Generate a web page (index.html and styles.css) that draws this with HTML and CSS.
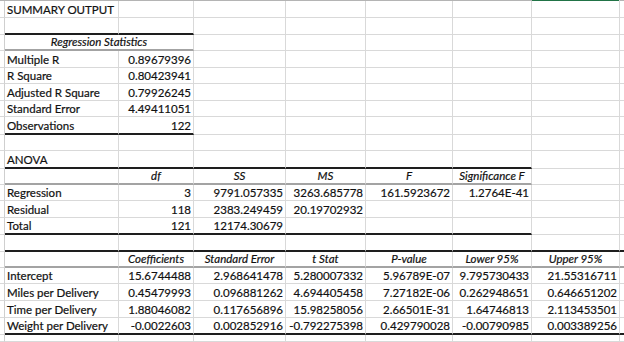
FILE: index.html
```html
<!DOCTYPE html>
<html lang="en">
<head>
<meta charset="utf-8">
<title>Summary Output</title>
<link rel="stylesheet" href="styles.css">
</head>
<body>
<div class="sheet">
  <!-- row 1 -->
  <div class="c s"></div><div class="c">SUMMARY OUTPUT</div><div class="c"></div><div class="c"></div><div class="c"></div><div class="c"></div><div class="c"></div><div class="c sel"></div><div class="c"></div>
  <!-- row 2 -->
  <div class="c s"></div><div class="c tk"></div><div class="c tk"></div><div class="c"></div><div class="c"></div><div class="c"></div><div class="c"></div><div class="c"></div><div class="c"></div>
  <!-- row 3 -->
  <div class="c s"></div><div class="c h tn span2">Regression Statistics</div><div class="c"></div><div class="c"></div><div class="c"></div><div class="c"></div><div class="c"></div><div class="c"></div>
  <!-- row 4 -->
  <div class="c s"></div><div class="c">Multiple R</div><div class="c n">0.89679396</div><div class="c"></div><div class="c"></div><div class="c"></div><div class="c"></div><div class="c"></div><div class="c"></div>
  <!-- row 5 -->
  <div class="c s"></div><div class="c">R Square</div><div class="c n">0.80423941</div><div class="c"></div><div class="c"></div><div class="c"></div><div class="c"></div><div class="c"></div><div class="c"></div>
  <!-- row 6 -->
  <div class="c s"></div><div class="c">Adjusted R Square</div><div class="c n">0.79926245</div><div class="c"></div><div class="c"></div><div class="c"></div><div class="c"></div><div class="c"></div><div class="c"></div>
  <!-- row 7 -->
  <div class="c s"></div><div class="c">Standard Error</div><div class="c n">4.49411051</div><div class="c"></div><div class="c"></div><div class="c"></div><div class="c"></div><div class="c"></div><div class="c"></div>
  <!-- row 8 -->
  <div class="c s"></div><div class="c tk">Observations</div><div class="c n tk">122</div><div class="c"></div><div class="c"></div><div class="c"></div><div class="c"></div><div class="c"></div><div class="c"></div>
  <!-- row 9 -->
  <div class="c s"></div><div class="c"></div><div class="c"></div><div class="c"></div><div class="c"></div><div class="c"></div><div class="c"></div><div class="c"></div><div class="c"></div>
  <!-- row 10 -->
  <div class="c s"></div><div class="c tk">ANOVA</div><div class="c tk"></div><div class="c tk"></div><div class="c tk"></div><div class="c tk"></div><div class="c tk"></div><div class="c"></div><div class="c"></div>
  <!-- row 11 -->
  <div class="c s"></div><div class="c tn"></div><div class="c h tn">df</div><div class="c h tn">SS</div><div class="c h tn">MS</div><div class="c h tn">F</div><div class="c h tn">Significance F</div><div class="c"></div><div class="c"></div>
  <!-- row 12 -->
  <div class="c s"></div><div class="c">Regression</div><div class="c n">3</div><div class="c n">9791.057335</div><div class="c n">3263.685778</div><div class="c n">161.5923672</div><div class="c n">1.2764E-41</div><div class="c"></div><div class="c"></div>
  <!-- row 13 -->
  <div class="c s"></div><div class="c">Residual</div><div class="c n">118</div><div class="c n">2383.249459</div><div class="c n">20.19702932</div><div class="c"></div><div class="c"></div><div class="c"></div><div class="c"></div>
  <!-- row 14 -->
  <div class="c s"></div><div class="c tk">Total</div><div class="c n tk">121</div><div class="c n tk">12174.30679</div><div class="c tk"></div><div class="c tk"></div><div class="c tk"></div><div class="c"></div><div class="c"></div>
  <!-- row 15 -->
  <div class="c s"></div><div class="c tk"></div><div class="c tk"></div><div class="c tk"></div><div class="c tk"></div><div class="c tk"></div><div class="c tk"></div><div class="c tk"></div><div class="c tk"></div>
  <!-- row 16 -->
  <div class="c s"></div><div class="c tn"></div><div class="c h tn">Coefficients</div><div class="c h tn">Standard Error</div><div class="c h tn">t Stat</div><div class="c h tn">P-value</div><div class="c h tn">Lower 95%</div><div class="c h tn">Upper 95%</div><div class="c tn"></div>
  <!-- row 17 -->
  <div class="c s"></div><div class="c">Intercept</div><div class="c n">15.6744488</div><div class="c n">2.968641478</div><div class="c n">5.280007332</div><div class="c n">5.96789E-07</div><div class="c n">9.795730433</div><div class="c n">21.55316711</div><div class="c"></div>
  <!-- row 18 -->
  <div class="c s"></div><div class="c">Miles per Delivery</div><div class="c n">0.45479993</div><div class="c n">0.096881262</div><div class="c n">4.694405458</div><div class="c n">7.27182E-06</div><div class="c n">0.262948651</div><div class="c n">0.646651202</div><div class="c"></div>
  <!-- row 19 -->
  <div class="c s"></div><div class="c">Time per Delivery</div><div class="c n">1.88046082</div><div class="c n">0.117656896</div><div class="c n">15.98258056</div><div class="c n">2.66501E-31</div><div class="c n">1.64746813</div><div class="c n">2.113453501</div><div class="c"></div>
  <!-- row 20 -->
  <div class="c s"></div><div class="c tk">Weight per Delivery</div><div class="c n tk">-0.0022603</div><div class="c n tk">0.002852916</div><div class="c n tk">-0.792275398</div><div class="c n tk">0.429790028</div><div class="c n tk">-0.00790985</div><div class="c n tk">0.003389256</div><div class="c tk"></div>
  <!-- row 21 -->
  <div class="c s"></div><div class="c"></div><div class="c"></div><div class="c"></div><div class="c"></div><div class="c"></div><div class="c"></div><div class="c"></div><div class="c"></div>
</div>
</body>
</html>
```

FILE: styles.css
```css
html, body {
  margin: 0;
  padding: 0;
  background: #ffffff;
}

body {
  width: 624px;
  height: 342px;
  overflow: hidden;
  font-family: Lato, "Liberation Sans", sans-serif;
  font-size: 11.5px;
  color: #111111;
  -webkit-text-stroke: 0.2px #111111;
}

.sheet {
  display: grid;
  grid-template-columns: 5px 114px 75px 92px 80px 87px 79px 88px 1fr;
  grid-template-rows: 17px 17px 16px 17px 16px 17px 16px 18px 16px 18px 16px 16px 17px 17px 17px 16px 16px 17px 17px 17px 1fr;
  height: 342px;
  border-top: 1px solid #b4b4b4;
  box-sizing: border-box;
}

.c {
  box-sizing: border-box;
  border-right: 1px solid #d9d9d9;
  border-bottom: 1px solid #d9d9d9;
  display: flex;
  align-items: flex-end;
  justify-content: flex-start;
  padding: 0 2px 0 2px;
  line-height: 14px;
  white-space: nowrap;
  min-width: 0;
}

.s {
  border-right-color: #cfcfcf;
}

.n {
  justify-content: flex-end;
}

.h {
  justify-content: center;
  font-style: italic;
}

.span2 {
  grid-column: span 2;
}

.tk {
  border-bottom: 2px solid #1e1e1e;
}

.tn {
  border-bottom: 2px solid #a3a3a3;
}

.sel {
  box-shadow: inset 0 1px 0 #217346;
  margin-top: -1px;
}
```
